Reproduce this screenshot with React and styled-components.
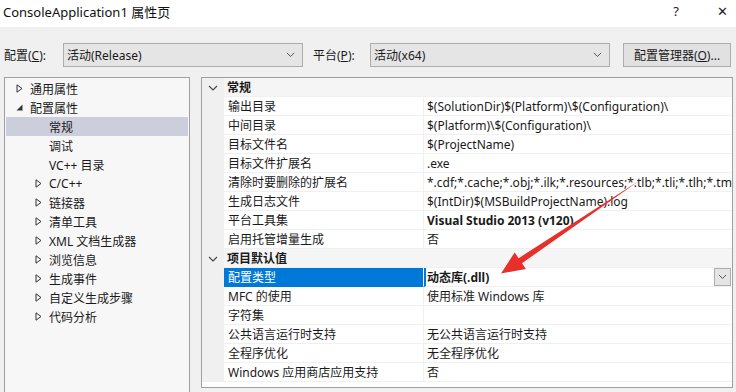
import React from 'react'
import styled, { createGlobalStyle } from 'styled-components'

const GlobalStyle = createGlobalStyle`
  html, body {
    margin: 0;
    padding: 0;
    background: #f0f0f0;
    font-family: "Noto Sans", "Noto Sans CJK SC", sans-serif;
    font-size: 12px;
    color: #1a1a1a;
  }
  * { box-sizing: border-box; }
`

const Window = styled.div`
  position: relative;
  width: 736px;
  height: 392px;
  overflow: hidden;
  background: #f0f0f0;
`

const TitleBar = styled.div`
  height: 27px;
  background: #fff;
  display: flex;
  align-items: center;
  padding-left: 3px;
`

const Title = styled.div`
  flex: 1;
  font-size: 13px;
  color: #111;
  margin-top: -5px;
`

const TitleButton = styled.div`
  width: ${p => p.w}px;
  margin-left: ${p => p.ml || 0}px;
  display: flex;
  justify-content: center;
  font-size: 13px;
  color: #222;
  margin-top: -5px;
`

const ConfigRow = styled.div`
  display: flex;
  align-items: center;
  height: 24px;
  margin-top: 16px;
  padding-left: 4px;
`

const Label = styled.span`
  width: ${p => p.w}px;
  font-size: 12px;
  u { text-decoration: underline; }
`

const Select = styled.div`
  width: ${p => p.w}px;
  height: 24px;
  border: 1px solid #adadad;
  background: #e5e5e5;
  display: flex;
  align-items: center;
  padding-left: 3px;
  margin-right: ${p => p.mr || 0}px;
`

const SelectText = styled.span`
  flex: 1;
`

const Chevron = ({ size = 9, color = '#555' }) => (
  <svg width={size} height={size * 0.6} viewBox="0 0 10 6">
    <path d="M1 1 L5 5 L9 1" fill="none" stroke={color} strokeWidth="1.1" />
  </svg>
)

const SelectArrow = styled.span`
  width: 20px;
  display: flex;
  justify-content: center;
  margin-right: 2px;
`

const Button = styled.div`
  width: 108px;
  height: 24px;
  border: 1px solid #adadad;
  background: #e1e1e1;
  display: flex;
  align-items: center;
  justify-content: center;
  u { text-decoration: underline; }
`

const Body = styled.div`
  display: flex;
  gap: 11px;
  margin-top: 10px;
  padding-left: 4px;
  height: 330px;
`

const Tree = styled.div`
  width: 186px;
  height: 330px;
  border: 1px solid #a0a0a0;
  border-bottom: none;
  background: #f7f7f7;
  padding: 1px;
`

const TreeItem = styled.div`
  height: 19px;
  display: flex;
  align-items: center;
  padding-left: ${p => 10 + p.level * 19}px;
  background: ${p => (p.selected ? '#cccedb' : 'transparent')};
`

const TwistSlot = styled.span`
  width: 14px;
  display: flex;
  align-items: center;
`

const Collapsed = () => (
  <svg width="7" height="9" viewBox="0 0 7 9">
    <path d="M1 0.8 L6 4.5 L1 8.2 Z" fill="none" stroke="#333" strokeWidth="1" />
  </svg>
)

const Expanded = () => (
  <svg width="7" height="7" viewBox="0 0 7 7">
    <path d="M6.5 0.5 L6.5 6.5 L0.5 6.5 Z" fill="#333" />
  </svg>
)

const Grid = styled.div`
  width: 532px;
  height: 311px;
  border: 1px solid #a0a0a0;
  background: #fff;
  display: grid;
  grid-template-columns: 22px 200px 1fr;
  grid-auto-rows: 19px;
  align-content: start;
`

const Gutter = styled.div`
  background: #f0f0f0;
  display: flex;
  align-items: center;
  justify-content: center;
`

const CategoryCell = styled.div`
  grid-column: 2 / 4;
  background: #f5f5f5;
  font-weight: 700;
  display: flex;
  align-items: center;
  padding-left: 3px;
  border-bottom: 1px solid #f0f0f0;
`

const NameCell = styled.div`
  display: flex;
  align-items: center;
  padding-left: 4px;
  border-bottom: 1px solid ${p => (p.selected ? '#0078d7' : '#f0f0f0')};
  border-right: 1px solid #f0f0f0;
  background: ${p => (p.selected ? '#0078d7' : '#fff')};
  color: ${p => (p.selected ? '#fff' : '#1a1a1a')};
  white-space: nowrap;
`

const ValueCell = styled.div`
  display: flex;
  align-items: center;
  padding-left: ${p => (p.selected ? 1 : 3)}px;
  border-bottom: 1px solid #f0f0f0;
  font-weight: ${p => (p.bold ? 700 : 400)};
  white-space: nowrap;
  overflow: hidden;
  border-left: ${p => (p.selected ? '2px solid #0078d7' : 'none')};
`

const ValueText = styled.span`
  flex: 1;
  overflow: hidden;
`

const DropButton = styled.span`
  width: 17px;
  height: 18px;
  border: 1px solid #adadad;
  background: #e5e5e5;
  display: flex;
  align-items: center;
  justify-content: center;
  margin-right: 1px;
`

const Annotation = styled.svg`
  position: absolute;
  left: 0;
  top: 0;
  pointer-events: none;
`

const tree = [
  { label: '通用属性', level: 0, twist: 'c' },
  { label: '配置属性', level: 0, twist: 'e' },
  { label: '常规', level: 1, selected: true },
  { label: '调试', level: 1 },
  { label: 'VC++ 目录', level: 1 },
  { label: 'C/C++', level: 1, twist: 'c' },
  { label: '链接器', level: 1, twist: 'c' },
  { label: '清单工具', level: 1, twist: 'c' },
  { label: 'XML 文档生成器', level: 1, twist: 'c' },
  { label: '浏览信息', level: 1, twist: 'c' },
  { label: '生成事件', level: 1, twist: 'c' },
  { label: '自定义生成步骤', level: 1, twist: 'c' },
  { label: '代码分析', level: 1, twist: 'c' },
]

const sections = [
  {
    title: '常规',
    rows: [
      ['输出目录', '$(SolutionDir)$(Platform)\\$(Configuration)\\'],
      ['中间目录', '$(Platform)\\$(Configuration)\\'],
      ['目标文件名', '$(ProjectName)'],
      ['目标文件扩展名', '.exe'],
      ['清除时要删除的扩展名', '*.cdf;*.cache;*.obj;*.ilk;*.resources;*.tlb;*.tli;*.tlh;*.tmp;*.rsp;*.pgc;*.pgd;*.meta'],
      ['生成日志文件', '$(IntDir)$(MSBuildProjectName).log'],
      ['平台工具集', 'Visual Studio 2013 (v120)', { bold: true }],
      ['启用托管增量生成', '否'],
    ],
  },
  {
    title: '项目默认值',
    rows: [
      ['配置类型', '动态库(.dll)', { bold: true, selected: true }],
      ['MFC 的使用', '使用标准 Windows 库'],
      ['字符集', ''],
      ['公共语言运行时支持', '无公共语言运行时支持'],
      ['全程序优化', '无全程序优化'],
      ['Windows 应用商店应用支持', '否'],
    ],
  },
]

export default function App() {
  return (
    <Window>
      <GlobalStyle />
      <TitleBar>
        <Title>ConsoleApplication1 属性页</Title>
        <TitleButton w={46}>?</TitleButton>
        <TitleButton w={28} ml={9}>✕</TitleButton>
      </TitleBar>

      <ConfigRow>
        <Label w={59}>配置(<u>C</u>):</Label>
        <Select w={240} mr={10}>
          <SelectText>活动(Release)</SelectText>
          <SelectArrow><Chevron /></SelectArrow>
        </Select>
        <Label w={57}>平台(<u>P</u>):</Label>
        <Select w={240} mr={13}>
          <SelectText>活动(x64)</SelectText>
          <SelectArrow><Chevron /></SelectArrow>
        </Select>
        <Button>配置管理器(<u>O</u>)...</Button>
      </ConfigRow>

      <Body>
        <Tree>
          {tree.map(t => (
            <TreeItem key={t.label} level={t.level} selected={t.selected}>
              <TwistSlot>
                {t.twist === 'c' && <Collapsed />}
                {t.twist === 'e' && <Expanded />}
              </TwistSlot>
              {t.label}
            </TreeItem>
          ))}
        </Tree>

        <Grid>
          {sections.map(s => (
            <React.Fragment key={s.title}>
              <Gutter><Chevron size={10} color="#444" /></Gutter>
              <CategoryCell>{s.title}</CategoryCell>
              {s.rows.map(([name, value, opt = {}]) => (
                <React.Fragment key={name}>
                  <Gutter />
                  <NameCell selected={opt.selected}>{name}</NameCell>
                  <ValueCell bold={opt.bold} selected={opt.selected}>
                    <ValueText>{value}</ValueText>
                    {opt.selected && (
                      <DropButton><Chevron size={9} color="#555" /></DropButton>
                    )}
                  </ValueCell>
                </React.Fragment>
              ))}
            </React.Fragment>
          ))}
        </Grid>
      </Body>

      <Annotation width="736" height="392" viewBox="0 0 736 392">
        <polygon
          points="641,179.5 518.6,258.2 514.7,252.4 501,273.5 525.9,269 522,263.2"
          fill="#e8302a"
        />
      </Annotation>
    </Window>
  )
}
